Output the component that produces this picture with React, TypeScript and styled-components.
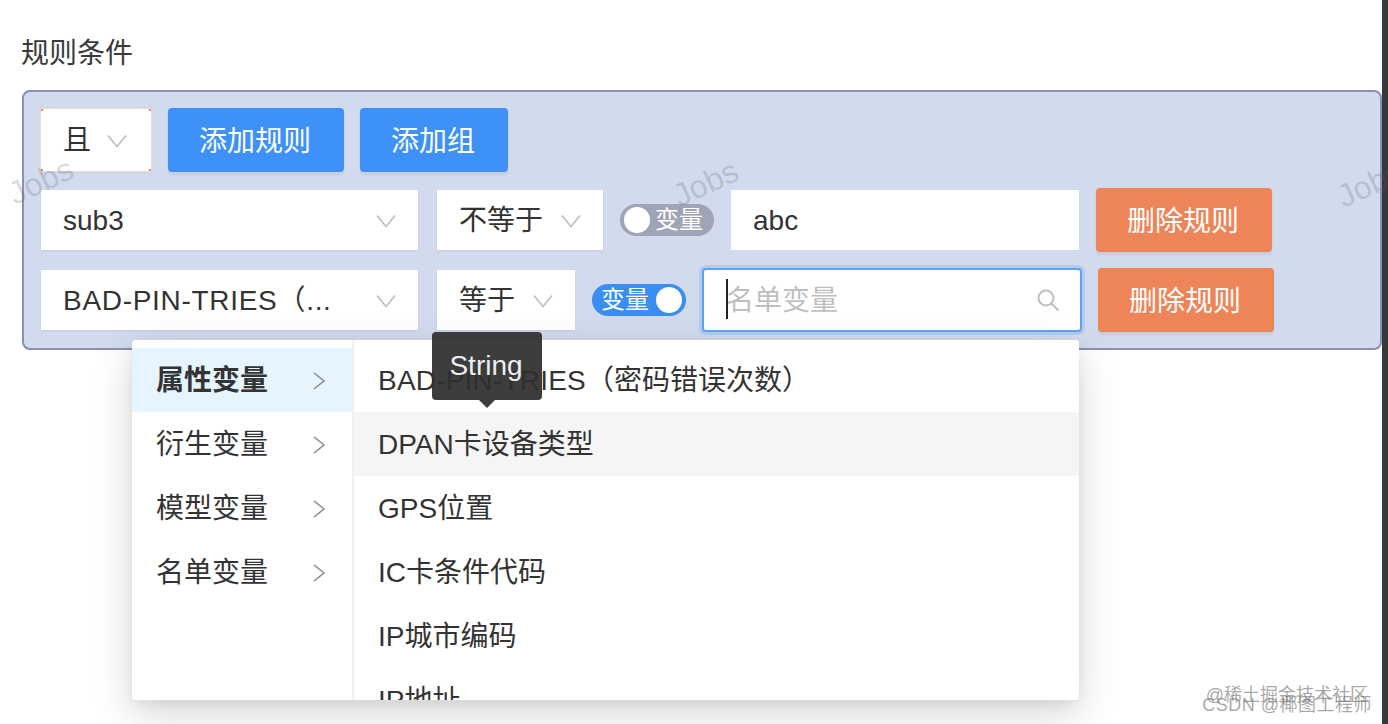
import React from 'react';
import styled, { createGlobalStyle } from 'styled-components';

const GlobalStyle = createGlobalStyle`
  html, body {
    margin: 0;
    padding: 0;
    height: 100%;
    background: #fff;
    overflow: hidden;
  }
  body {
    font-family: "Liberation Sans", "Noto Sans CJK SC", sans-serif;
    color: #333;
  }
`;

const Page = styled.div`
  display: flex;
  width: 1388px;
  height: 724px;
  overflow: hidden;
`;

const Main = styled.div`
  position: relative;
  flex: 1;
  padding: 34px 0 0 22px;
  box-sizing: border-box;
`;

const ScrollEdge = styled.div`
  width: 6px;
  background: #36393b;
`;

const Title = styled.div`
  font-size: 28px;
  line-height: 40px;
  color: #3a3a3a;
  margin-bottom: 16px;
  margin-left: -1px;
`;

const Panel = styled.div`
  display: flex;
  flex-direction: column;
  gap: 16px;
  height: 260px;
  box-sizing: border-box;
  padding: 16px 0 16px 17px;
  background: #d2daed;
  border: 2px solid #8b8fb3;
  border-radius: 8px;
`;

const Row = styled.div`
  display: flex;
  align-items: center;
  height: 64px;
`;

const Select = styled.div<{ $w: number; $h?: number; $ml?: number; $marked?: boolean }>`
  display: flex;
  align-items: center;
  justify-content: space-between;
  box-sizing: border-box;
  width: ${p => p.$w}px;
  height: ${p => p.$h ?? 60}px;
  margin-left: ${p => p.$ml ?? 0}px;
  padding: 2px 22px 0;
  background: #fff;
  font-size: 28px;
  line-height: 40px;
  color: #333;
  white-space: nowrap;
  box-shadow: 0 1px 2px rgba(120, 120, 140, 0.15);
  ${p => p.$marked && `
    padding-right: 24px;
    outline: 1px solid #e5dcd8;
    background-image:
      linear-gradient(#ee8559, #ee8559), linear-gradient(#ee8559, #ee8559),
      linear-gradient(#ee8559, #ee8559), linear-gradient(#ee8559, #ee8559);
    background-repeat: no-repeat;
    background-size: 2px 2px;
    background-position: 0 0, 100% 0, 0 100%, 100% 100%;
  `}
`;

const Button = styled.button<{ $w: number; $ml: number; $danger?: boolean }>`
  width: ${p => p.$w}px;
  height: 64px;
  margin-left: ${p => p.$ml}px;
  padding: 0 0 2px;
  border: none;
  border-radius: 4px;
  background: ${p => (p.$danger ? '#ee8559' : '#3d91f7')};
  color: #fff;
  font-family: inherit;
  font-size: 28px;
  text-indent: -2px;
  box-shadow: 0 3px 2px rgba(90, 100, 140, 0.1);
`;

const Toggle = styled.div<{ $on?: boolean; $ml: number }>`
  display: flex;
  flex-direction: ${p => (p.$on ? 'row-reverse' : 'row')};
  align-items: center;
  justify-content: space-between;
  box-sizing: border-box;
  width: 94px;
  height: 32px;
  margin-left: ${p => p.$ml}px;
  padding: ${p => (p.$on ? '0 4px 0 9px' : '0 11px 0 4px')};
  border-radius: 16px;
  background: ${p => (p.$on ? '#3a8ef2' : '#9fa5b5')};
  color: #fff;
  font-size: 24px;
  line-height: 32px;
`;

const Knob = styled.span`
  width: 26px;
  height: 26px;
  border-radius: 50%;
  background: #fff;
`;

const TextInput = styled.div<{ $w: number; $ml: number }>`
  display: flex;
  align-items: center;
  box-sizing: border-box;
  width: ${p => p.$w}px;
  height: 60px;
  margin-left: ${p => p.$ml}px;
  padding: 2px 22px 0;
  background: #fff;
  font-size: 28px;
  line-height: 40px;
  color: #333;
`;

const SearchInput = styled.div<{ $w: number; $ml: number }>`
  display: flex;
  align-items: center;
  justify-content: space-between;
  box-sizing: border-box;
  width: ${p => p.$w}px;
  height: 64px;
  margin-left: ${p => p.$ml}px;
  padding: 0 20px 0 22px;
  background: #fff;
  border: 2px solid #5ca4f2;
  border-radius: 4px;
  box-shadow: 0 0 0 3px rgba(70, 140, 240, 0.2);
  font-size: 28px;
  line-height: 40px;
  color: #bfbfbf;
`;

const Placeholder = styled.span`
  position: relative;
  padding-top: 2px;
  &::before {
    content: '';
    position: absolute;
    left: 0;
    top: 0;
    width: 2px;
    height: 40px;
    background: #222;
  }
`;

const Dropdown = styled.div`
  position: absolute;
  left: 132px;
  top: 340px;
  z-index: 3;
  display: flex;
  width: 947px;
  height: 360px;
  overflow: hidden;
  background: #fff;
  border-radius: 4px;
  box-shadow: 0 14px 40px rgba(0, 0, 0, 0.16), 0 4px 12px rgba(0, 0, 0, 0.06);
`;

const Column = styled.div<{ $w: number; $divider?: boolean }>`
  box-sizing: border-box;
  width: ${p => p.$w}px;
  flex: none;
  padding-top: 8px;
  border-right: ${p => (p.$divider ? '2px solid #f0f0f0' : 'none')};
`;

const Option = styled.div<{ $bg?: string; $bold?: boolean }>`
  display: flex;
  align-items: center;
  justify-content: space-between;
  box-sizing: border-box;
  height: 64px;
  flex: none;
  padding: 2px 26px 0 24px;
  background: ${p => p.$bg ?? 'transparent'};
  font-size: 28px;
  line-height: 40px;
  font-weight: ${p => (p.$bold ? 700 : 400)};
  color: #333;
  white-space: nowrap;
`;

// the dashes of this field name run wider in the reference
const WideText = styled.span<{ $spacing: number }>`
  letter-spacing: ${p => p.$spacing}px;
`;

const Tooltip = styled.div`
  position: absolute;
  left: 432px;
  top: 332px;
  z-index: 4;
  width: 110px;
  height: 68px;
  box-sizing: border-box;
  padding-top: 16px;
  text-align: center;
  text-indent: -2px;
  background: rgba(46, 46, 46, 0.93);
  border-radius: 4px;
  color: #eee;
  font-size: 28px;
  line-height: 36px;
  &::after {
    content: '';
    position: absolute;
    left: 47px;
    bottom: -8px;
    border-left: 8px solid transparent;
    border-right: 8px solid transparent;
    border-top: 8px solid rgba(46, 46, 46, 0.93);
  }
`;

const Jobs = styled.span<{ $x: number; $y: number }>`
  position: absolute;
  left: ${p => p.$x}px;
  top: ${p => p.$y}px;
  z-index: 2;
  font-size: 32px;
  line-height: 36px;
  color: rgba(90, 90, 100, 0.22);
  transform: rotate(-25deg);
  pointer-events: none;
`;

const Credit = styled.span<{ $right: number; $top: number; $spread?: boolean }>`
  position: absolute;
  right: ${p => p.$right}px;
  top: ${p => p.$top}px;
  z-index: 5;
  font-size: 18px;
  line-height: 22px;
  letter-spacing: ${p => (p.$spread ? '0.5px' : '0')};
  color: rgba(110, 110, 110, 0.6);
  white-space: nowrap;
`;

const ChevronDown = () => (
  <svg width="20" height="14" viewBox="0 0 20 14" fill="none" stroke="#bdbdbd" strokeWidth="1.6">
    <path d="M1 1.5 10 12.5 19 1.5" />
  </svg>
);

const ChevronRight = () => (
  <svg width="14" height="20" viewBox="0 0 14 20" fill="none" stroke="#8c8c8c" strokeWidth="1.6">
    <path d="M2 2 12 10 2 18" />
  </svg>
);

const SearchIcon = () => (
  <svg width="24" height="24" viewBox="0 0 24 24" fill="none" stroke="#bfbfbf" strokeWidth="2">
    <circle cx="10" cy="10" r="7.5" />
    <path d="M15.5 15.5 22.5 22.5" />
  </svg>
);

const groups = ['属性变量', '衍生变量', '模型变量', '名单变量'];
const fields = ['DPAN卡设备类型', 'GPS位置', 'IC卡条件代码', 'IP城市编码', 'IP地址'];

export default function App() {
  return (
    <Page>
      <GlobalStyle />
      <Main>
        <Title>规则条件</Title>
        <Panel>
          <Row>
            <Select $w={110} $h={62} $marked>
              且 <ChevronDown />
            </Select>
            <Button $w={176} $ml={17}>添加规则</Button>
            <Button $w={148} $ml={16}>添加组</Button>
          </Row>
          <Row>
            <Select $w={377}>
              sub3 <ChevronDown />
            </Select>
            <Select $w={166} $ml={19}>
              不等于 <ChevronDown />
            </Select>
            <Toggle $ml={17}>
              <Knob />
              变量
            </Toggle>
            <TextInput $w={348} $ml={17}>abc</TextInput>
            <Button $w={176} $ml={17} $danger>删除规则</Button>
          </Row>
          <Row>
            <Select $w={377}>
              <WideText $spacing={0.7}>BAD-PIN-TRIES（...</WideText> <ChevronDown />
            </Select>
            <Select $w={138} $ml={19}>
              等于 <ChevronDown />
            </Select>
            <Toggle $ml={17} $on>
              <Knob />
              变量
            </Toggle>
            <SearchInput $w={380} $ml={16}>
              <Placeholder>名单变量</Placeholder>
              <SearchIcon />
            </SearchInput>
            <Button $w={176} $ml={16} $danger>删除规则</Button>
          </Row>
        </Panel>

        <Jobs $x={7} $y={163}>Jobs</Jobs>
        <Jobs $x={672} $y={165}>Jobs</Jobs>
        <Jobs $x={1336} $y={166}>Jobs</Jobs>

        <Dropdown>
          <Column $w={222} $divider>
            {groups.map((name, i) => (
              <Option key={name} $bg={i === 0 ? '#e6f4ff' : undefined} $bold={i === 0}>
                {name}
                <ChevronRight />
              </Option>
            ))}
          </Column>
          <Column $w={725}>
            <Option>
              <span>
                <WideText $spacing={0.2}>BAD-PIN-TRIES</WideText>（密码错误次数）
              </span>
            </Option>
            {fields.map((name, i) => (
              <Option key={name} $bg={i === 0 ? '#f5f5f5' : undefined}>
                {name}
              </Option>
            ))}
          </Column>
        </Dropdown>
        <Tooltip>String</Tooltip>

        <Credit $right={14} $top={684}>@稀土掘金技术社区</Credit>
        <Credit $right={10} $top={694} $spread>CSDN @椰图工程师</Credit>
      </Main>
      <ScrollEdge />
    </Page>
  );
}
